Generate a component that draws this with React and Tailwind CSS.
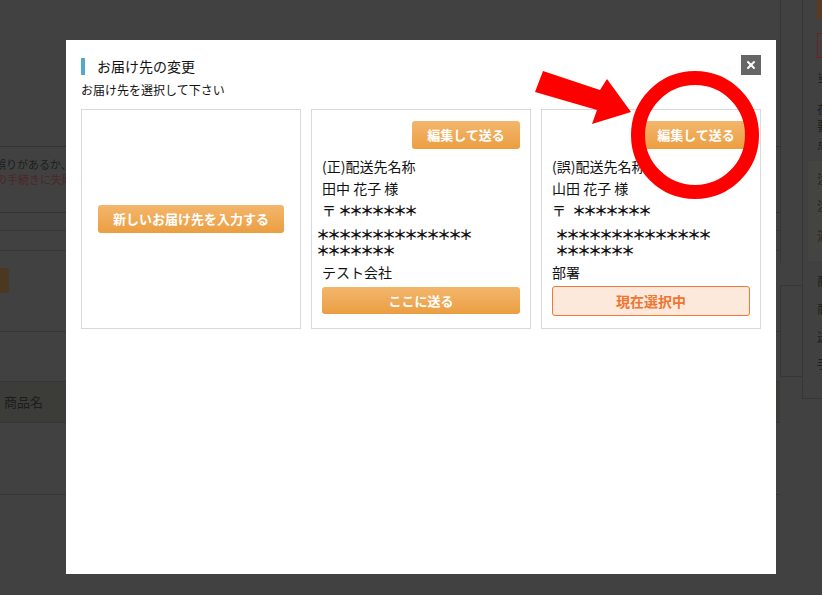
import { X } from 'lucide-react'

function OrangeButton({ children, className = '' }) {
  return (
    <button
      className={`flex items-center justify-center rounded-[3px] bg-linear-to-b from-[#f3b66c] to-[#eb9e40] text-[13px] font-bold text-white ${className}`}
    >
      {children}
    </button>
  )
}

function Stars({ n, className = '' }) {
  return (
    <span className={`font-bold tracking-[-3px] ${className}`}>{'＊'.repeat(n)}</span>
  )
}

function AddressCard({ label, name, company, selected, starsIndent }) {
  return (
    <div className="flex h-[220px] w-[220px] flex-col border border-[#d9d9d9] px-[10px] pt-[11px] text-[14px] text-[#111]">
      <div className="flex justify-end">
        <OrangeButton className="h-[28px] w-[108px]">編集して送る</OrangeButton>
      </div>
      <div className="mt-[6px] leading-[22px]">{label}配送先名称</div>
      <div className="leading-[22px]">{name}</div>
      <div className="leading-[22px]">
        〒<span className={selected ? 'ml-[6px]' : 'ml-[2px]'}><Stars n={7} /></span>
      </div>
      <div className={`mt-[5px] leading-[16px] ${starsIndent}`}>
        <Stars n={14} />
        <br />
        <Stars n={7} />
      </div>
      <div className="mt-[3px] leading-[22px]">{company}</div>
      {selected ? (
        <button className="mt-[3px] flex h-[30px] w-full items-center justify-center rounded-[3px] border border-[#f07a35] bg-[#fde9dc] text-[14px] font-bold text-[#ef7530]">
          現在選択中
        </button>
      ) : (
        <OrangeButton className="mt-[4px] h-[27px] w-full">ここに送る</OrangeButton>
      )}
    </div>
  )
}

export default function App() {
  return (
    <div className="relative h-[595px] w-[822px] overflow-hidden bg-[#414141] font-['Noto_Sans_CJK_JP',sans-serif]">
      {/* dimmed page behind the dialog */}
      <div className="flex h-full">
        <div className="flex w-[780px] shrink-0 flex-col">
          <div className="h-[147px] border-b border-[#333]" />
          <div className="h-[66px] border-b border-[#333] pt-[10px] text-[11px] leading-[15px] whitespace-nowrap">
            <p className="-ml-[5px] text-[#1d1d1d]">誤りがあるか、ご利用いただけないお支払い方法です。</p>
            <p className="-ml-[4px] text-[#4e2626]">の手続きに失敗しました。</p>
          </div>
          <div className="h-[18px] border-b border-[#383838]" />
          <div className="h-[20px] border-b border-[#383838]" />
          <div className="pt-[17px]">
            <div className="-ml-[20px] h-[25px] w-[29px] rounded-[3px] bg-[#4c3821]" />
          </div>
          <div className="h-[39px] border-b border-[#363636]" />
          <div className="h-[49px]" />
          <div className="flex h-[42px] items-center border-y border-[#363636] bg-[#3c3c38] pl-[4px] text-[13px] text-[#1d1d1d]">
            商品名
          </div>
          <div className="h-[72px] border-b border-[#363636]" />
        </div>
        <div className="flex w-[22px] shrink-0 flex-col">
          <div className="h-[263px] border-l border-[#363636]" />
          <div className="mt-[22px] h-[92px] border-y border-l border-[#363636]" />
        </div>
        <div className="flex h-[399px] w-[40px] shrink-0 flex-col border-b border-l border-[#363636] text-[12px] leading-[18px] text-[#1d1d1d]">
          <div className="ml-[14px] h-[20px] rounded-b-[3px] bg-[#5a3a20]" />
          <div className="ml-[14px] mt-[13px] h-[25px] border border-[#6b2222]" />
          <div className="ml-[14px] mt-[11px]">当</div>
          <div className="ml-[14px] mt-[13px]">在</div>
          <div className="ml-[14px] -mt-[1px]">要</div>
          <div className="ml-[14px]">点</div>
          <div className="ml-[5px] mt-[8px] h-[100px] bg-[#444442] pl-[9px] pt-[9px]">
            <div>注</div>
            <div className="mt-[9px]">注</div>
            <div className="mt-[12px]">消</div>
          </div>
          <div className="ml-[14px] mt-[11px]">商</div>
          <div className="ml-[14px] mt-[10px]">商</div>
          <div className="ml-[14px] mt-[10px]">送</div>
          <div className="ml-[14px] mt-[9px]">手</div>
        </div>
      </div>

      {/* dialog */}
      <div className="absolute left-[66px] top-[40px] h-[534px] w-[710px] bg-white px-[15px] pt-[18px]">
        <button className="absolute right-[15px] top-[15px] flex h-[20px] w-[20px] items-center justify-center bg-[#666]">
          <X size={12} strokeWidth={4} color="#fff" />
        </button>
        <div className="flex h-[17px] items-center border-l-[4px] border-[#52a9cc] pl-[12px] text-[14px] text-[#111]">
          お届け先の変更
        </div>
        <p className="mt-[7px] text-[12px] leading-[16px] text-[#111]">お届け先を選択して下さい</p>
        <div className="mt-[11px] flex gap-[10px]">
          <div className="flex h-[220px] w-[220px] items-center justify-center border border-[#d9d9d9]">
            <OrangeButton className="h-[28px] w-[186px]">新しいお届け先を入力する</OrangeButton>
          </div>
          <AddressCard label="(正)" name="田中 花子 様" company="テスト会社" starsIndent="-ml-[6px]" />
          <AddressCard label="(誤)" name="山田 花子 様" company="部署" selected starsIndent="ml-[3px]" />
        </div>
      </div>

      {/* annotation */}
      <svg className="pointer-events-none absolute left-0 top-0" width="822" height="595">
        <polygon points="543,71 600,90 607,79 631,112 592,124 597,110 535,92" fill="#ff0000" />
        <circle cx="695" cy="135" r="57" fill="none" stroke="#ff0000" strokeWidth="14" />
      </svg>
    </div>
  )
}
